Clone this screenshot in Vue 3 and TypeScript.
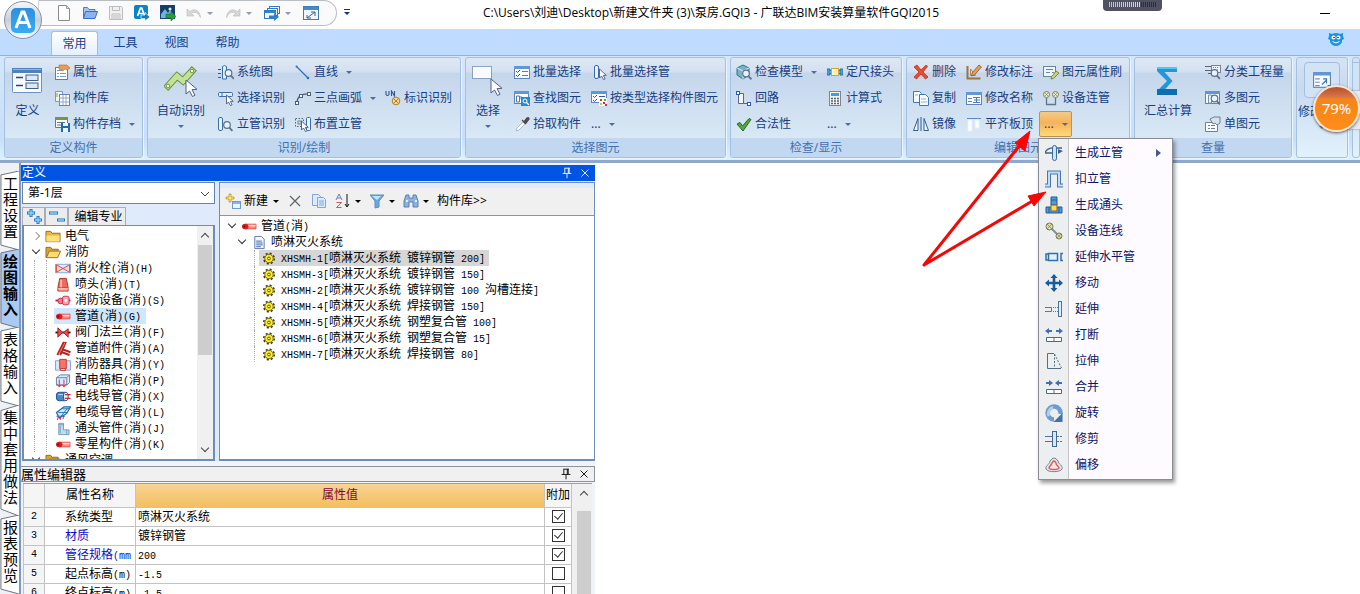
<script setup lang="ts">
import { ref } from 'vue'

interface Item { text: string; icon?: string; caret?: boolean; menu?: boolean }
interface Group { key: string; label: string; big?: Item; cols: (Item | null)[][] }

const tabs = ['常用', '工具', '视图', '帮助']
const activeTab = ref('常用')

const quick: { icon: string; name: string; caret?: boolean }[] = [
  { icon: 'newDoc', name: '新建' },
  { icon: 'open', name: '打开' },
  { icon: 'save', name: '保存' },
  { icon: 'exportA', name: '导出' },
  { icon: 'picture', name: '图片' },
  { icon: 'undo', name: '撤销', caret: true },
  { icon: 'redo', name: '恢复', caret: true },
  { icon: 'windows', name: '窗口', caret: true },
  { icon: 'fullscreen', name: '全屏' },
]

const groups: Group[] = [
  {
    key: 'define', label: '定义构件', big: { text: '定义', icon: 'define' },
    cols: [[{ text: '属性', icon: 'props' }, { text: '构件库', icon: 'lib' }, { text: '构件存档', icon: 'archive', caret: true }]],
  },
  {
    key: 'draw', label: '识别/绘制', big: { text: '自动识别', icon: 'auto', caret: true },
    cols: [
      [{ text: '系统图', icon: 'sysmap' }, { text: '选择识别', icon: 'selrec' }, { text: '立管识别', icon: 'pipefind' }],
      [{ text: '直线', icon: 'line', caret: true }, { text: '三点画弧', icon: 'arc', caret: true }, { text: '布置立管', icon: 'placepipe' }],
      [null, { text: '标识识别', icon: 'mark' }],
    ],
  },
  {
    key: 'select', label: '选择图元', big: { text: '选择', icon: 'select', caret: true },
    cols: [
      [{ text: '批量选择', icon: 'batch' }, { text: '查找图元', icon: 'find' }, { text: '拾取构件', icon: 'pick' }],
      [{ text: '批量选择管', icon: 'pipesel' }, { text: '按类型选择构件图元', icon: 'typesel' }, { text: '...', caret: true }],
    ],
  },
  {
    key: 'check', label: '检查/显示',
    cols: [
      [{ text: '检查模型', icon: 'model', caret: true }, { text: '回路', icon: 'loop' }, { text: '合法性', icon: 'legal' }],
      [{ text: '定尺接头', icon: 'joint' }, { text: '计算式', icon: 'calc' }, { text: '...', caret: true }],
    ],
  },
  {
    key: 'edit', label: '编辑图元',
    cols: [
      [{ text: '删除', icon: 'del' }, { text: '复制', icon: 'copy' }, { text: '镜像', icon: 'mirror' }],
      [{ text: '修改标注', icon: 'anno' }, { text: '修改名称', icon: 'rename' }, { text: '平齐板顶', icon: 'align' }],
      [{ text: '图元属性刷', icon: 'brush' }, { text: '设备连管', icon: 'connect' }, { text: '...', caret: true, menu: true }],
    ],
  },
  {
    key: 'query', label: '查量', big: { text: '汇总计算', icon: 'sigma' },
    cols: [[{ text: '分类工程量', icon: 'classify' }, { text: '多图元', icon: 'multi' }, { text: '单图元', icon: 'single' }]],
  },
]

const menu: Item[] = [
  { text: '生成立管', icon: 'mGen', caret: true }, { text: '扣立管', icon: 'mCut' }, { text: '生成通头', icon: 'mTee' },
  { text: '设备连线', icon: 'mWire' }, { text: '延伸水平管', icon: 'mHoriz' }, { text: '移动', icon: 'mMove' },
  { text: '延伸', icon: 'mExtend' }, { text: '打断', icon: 'mBreak' }, { text: '拉伸', icon: 'mStretch' },
  { text: '合并', icon: 'mMerge' }, { text: '旋转', icon: 'mRotate' }, { text: '修剪', icon: 'mTrim' }, { text: '偏移', icon: 'mOffset' },
]

const sideTabs = ['工程设置', '绘图输入', '表格输入', '集中套用做法', '报表预览']
const activeSide = ref('绘图输入')

const fire: Item[] = [
  { text: '消火栓(消)(H)', icon: 'tHydrant' }, { text: '喷头(消)(T)', icon: 'tHead' }, { text: '消防设备(消)(S)', icon: 'tEquip' },
  { text: '管道(消)(G)', icon: 'tPipe' }, { text: '阀门法兰(消)(F)', icon: 'tValve' }, { text: '管道附件(消)(A)', icon: 'tFitting' },
  { text: '消防器具(消)(Y)', icon: 'tTool' }, { text: '配电箱柜(消)(P)', icon: 'tBox' }, { text: '电线导管(消)(X)', icon: 'tWire' },
  { text: '电缆导管(消)(L)', icon: 'tCable' }, { text: '通头管件(消)(J)', icon: 'tElbow' }, { text: '零星构件(消)(K)', icon: 'tPipe' },
]
const activeFire = ref('管道(消)(G)')

const pipes = [
  'XHSMH-1[喷淋灭火系统 镀锌钢管 200]', 'XHSMH-3[喷淋灭火系统 镀锌钢管 150]', 'XHSMH-2[喷淋灭火系统 镀锌钢管 100 沟槽连接]',
  'XHSMH-4[喷淋灭火系统 焊接钢管 150]', 'XHSMH-5[喷淋灭火系统 钢塑复合管 100]', 'XHSMH-6[喷淋灭火系统 钢塑复合管 15]',
  'XHSMH-7[喷淋灭火系统 焊接钢管 80]',
]
const activePipe = ref(pipes[0])

const rows = ref([
  { n: 2, name: '系统类型', value: '喷淋灭火系统', on: true, key: false },
  { n: 3, name: '材质', value: '镀锌钢管', on: true, key: true },
  { n: 4, name: '管径规格(mm', value: '200', on: true, key: true },
  { n: 5, name: '起点标高(m)', value: '-1.5', on: false, key: false },
  { n: 6, name: '终点标高(m)', value: '-1.5', on: false, key: false },
])

// Splits a label into wide (CJK) and narrow (ASCII) runs so narrow glyphs take half a cell.
const runs = (s: string) => s.match(/[\x20-\x7e]+|[^\x20-\x7e]+/g) ?? []
const narrow = (s: string) => /^[\x20-\x7e]/.test(s)

const win = (x: number, y: number, w: number, h: number) =>
  `<rect x="${x + 0.5}" y="${y + 0.5}" width="${w - 1}" height="${h - 1}" fill="#f7fbff" stroke="#5b86bd"/><rect x="${x}" y="${y}" width="${w}" height="3" fill="#6197d2"/>`
const lens = (x: number, y: number) =>
  `<circle cx="${x}" cy="${y}" r="3.3" fill="#e6f2fd" stroke="#62718a" stroke-width="1.2"/><path d="M${x + 2.4} ${y + 2.6}l3 3.2" stroke="#62718a" stroke-width="1.8"/>`
const cursor = (x: number, y: number) =>
  `<path d="M${x} ${y}v9l2-2 2 3.6 1.6-.8-1.8-3.4h3z" fill="#fff" stroke="#4c5a78" stroke-width=".9"/>`
const pipeV = (x: number) =>
  `<rect x="${x + 0.5}" y="1.5" width="4" height="13" rx="1.5" fill="#e4f3ff" stroke="#3c6ea5"/>`

const icons: Record<string, string> = {
  newDoc: '<path d="M2.500.5h8l3 3v12h-11z" fill="#fdfdfd" stroke="#8b8b8b"/><path d="M10.500.5v3h3" fill="#ddd" stroke="#999"/>',
  open: '<path d="M1.500 13.500v-11h4l1.500 2h6v3" fill="#a9c5f3" stroke="#4f7cc9"/><path d="M1.500 13.500l2-7h12l-2.500 7z" fill="#8cb2f1" stroke="#3e6ec2"/>',
  save: '<path d="M1.500 1.500h12l1 1v12h-13z" fill="#f0f0f0" stroke="#bdbdbd"/><path d="M4.500 1.500v4h7v-4M4 14v-5h8v5M5 11h6M5 13h6" fill="none" stroke="#bdbdbd"/>',
  exportA: '<rect x="0" y="0" width="14" height="14" rx="2" fill="#0b84c6"/><path d="M3.500 11l3-8h1.200l3 8M4.800 8.500h4.600" fill="none" stroke="#fff" stroke-width="1.700"/><path d="M7 10h4V7.500l5 4.500-5 4v-2.500H7z" fill="#1779bd" stroke="#fff" stroke-width=".7"/>',
  picture: '<rect x=".5" y=".5" width="14" height="13" fill="#163b64" stroke="#154277"/><path d="M1 9l4-5 3 4 2-3 4 5v3H1z" fill="#6ab5e4"/><circle cx="10" cy="4" r="1.500" fill="#d6f1ff"/><path d="M6 9h5V6.500l5 5-5 4.500v-3H6z" fill="#2d9b37" stroke="#176b23" stroke-width=".6"/>',
  undo: '<path d="M1 4v7h7l-2.500-2.500c3-2.500 6.500-1 9 4C14 6 9 2.500 3.800 6.500z" fill="#d7d7d7" stroke="#bebebe" stroke-width=".7"/>',
  redo: '<path d="M15 4v7H8l2.500-2.500c-3-2.500-6.500-1-9 4C2 6 7 2.500 12.200 6.500z" fill="#d7d7d7" stroke="#bebebe" stroke-width=".7"/>',
  windows: '<g fill="#f3f9ff" stroke="#3479bd"><rect x="5.500" y="1.500" width="10" height="7"/><rect x="3.500" y="3.500" width="10" height="7"/><rect x=".5" y="5.500" width="11" height="8"/></g><path d="M1 6h10v2H1z" fill="#2d86d3"/><path d="M5 15h5v2l5-4-5-4v2.500H5z" transform="translate(0 -1)" fill="#2f7fd0"/>',
  fullscreen: '<rect x=".5" y="1.500" width="15" height="13" fill="#eef7ff" stroke="#3e7fb9"/><path d="M1 2h14v3H1z" fill="#3f8ec9"/><path d="M4 13l8-6M12 11V7H8M4 10v3h4" fill="none" stroke="#486077"/>',
  define: '<rect x="1.500" y="3.500" width="29" height="24" rx="1" fill="#f7fbff" stroke="#6e91bb"/><path d="M1 3h30v5H1z" fill="#4d82bd"/><path d="M2 4.500h28" stroke="#8cb7e5"/><path d="M5 12.500h7M5 20.500h7" stroke="#26476e" stroke-width="1.500"/><rect x="15" y="10" width="12" height="5.500" fill="#dce8f6" stroke="#41618c"/><rect x="15" y="18" width="12" height="5.500" fill="#dce8f6" stroke="#41618c"/>',
  props: '<rect x="1.500" y="3.500" width="12" height="12" fill="#fff" stroke="#5b7eac"/><path d="M3 6.500h5M3 9.500h2M6 9.500h6M3 12.500h2M6 12.500h6" stroke="#7699c5"/><path d="M5 1h8l3 3-3 2-2-1-2 2-4-2z" fill="#e79b55" stroke="#b66c2a" stroke-width=".6"/>',
  lib: '<path d="M1.500 1.500h7v10h-7z" fill="#eef5fc" stroke="#7c97ba"/><rect x="5.500" y="4.500" width="10" height="11" fill="#fff" stroke="#6787ae"/><path d="M5 8h10M5 12h10M9 5v10M12 5v10" stroke="#8faacb"/><rect x="2" y="3" width="2" height="4" fill="#e1c06b"/>',
  archive: '<path d="M1.500 1.500h12v10h-12z" fill="#f8fbf4" stroke="#587b9d"/><path d="M1 1h13v3H1z" fill="#75954f"/><path d="M3 6.500h8M3 9h4" stroke="#577694"/><rect x="7" y="7" width="9" height="9" fill="#2469ad"/><path d="M9 7h5v3H9zM9 12h5v4H9z" fill="#e9f5ff"/>',
  auto: '<path d="M4 21l9-10 6 5L28 6" fill="none" stroke="#6b8f45" stroke-width="7" stroke-linecap="square"/><path d="M4 21l9-10 6 5L28 6" fill="none" stroke="#c3e294" stroke-width="5" stroke-linecap="square"/><circle cx="4" cy="21" r="1.800" fill="#f3ffdf" stroke="#75974e"/><circle cx="28" cy="6" r="1.800" fill="#f3ffdf" stroke="#75974e"/><path d="M22 15v14l3.500-3 3 5.500 2.500-1.300-3-5.500 5-.4z" fill="#fff" stroke="#4d6186"/>',
  sysmap: '<path d="M0 5.500h3M0 9.500h3M0 13.500h3" stroke="#3c5b85"/><path d="M4.500 15V2.500q2-2 4 0V15z" fill="#dff1ff" stroke="#3c6ea5"/>' + lens(10.500, 9),
  selrec: '<rect x=".5" y="2.500" width="14" height="4" rx="1" fill="#dff1ff" stroke="#3c6ea5"/><path d="M4 2v4" stroke="#3c6ea5"/>' + cursor(8.500, 5),
  pipefind: pipeV(0) + lens(9, 9),
  line: '<path d="M1.500 2.500l11 11" stroke="#2872bd" stroke-width="1.300"/><circle cx="1.500" cy="2.500" r="1" fill="#2872bd"/><circle cx="13" cy="14" r="1.300" fill="#2872bd"/>',
  arc: '<path d="M2 13C2 7 6 3 15 4" fill="none" stroke="#49617e" stroke-width="1.300"/><g fill="#fff" stroke="#49617e"><rect x=".5" y="11.500" width="3" height="3"/><rect x="4.500" y="4.500" width="3" height="3"/><rect x="12.500" y="2.500" width="3" height="3"/></g>',
  placepipe: '<rect x=".5" y="2.500" width="8" height="8" fill="none" stroke="#4e6788" stroke-dasharray="1.500 1.500"/><rect x="3" y="5" width="3" height="3" fill="none" stroke="#6a84a5"/><rect x="11.500" y="1.500" width="4" height="13" rx="1" fill="#e4f3ff" stroke="#3c6ea5"/>' + cursor(6.500, 5),
  mark: '<path d="M1 1v3.500q1.500 2 3 0V1M6.500 6V1l3 5V1" fill="none" stroke="#33588e" stroke-width="1.100"/><circle cx="11" cy="11" r="3.800" fill="#ffd981" stroke="#a87f34"/><path d="M8.500 8.500l5 5M13.500 8.500l-5 5" stroke="#a87f34"/>',
  select: '<rect x="1.500" y="1.500" width="19" height="12" fill="#f7fbff"/><rect x="1.500" y="1.500" width="19" height="12" fill="none" stroke="#345b91" stroke-dasharray="1 1"/><path d="M20 14v14l3.500-3 3 5.500 2.500-1.300-3-5.500 5-.4z" fill="#fff" stroke="#4d6186"/>',
  batch: win(0, 2, 16, 13) + '<path d="M2 7l1.500 1.500L6 6M2 11l1.500 1.500L6 10" fill="none" stroke="#315d90"/><path d="M8 7.500h6M8 11.500h6" stroke="#577daf"/>',
  find: win(0, 1, 15, 13) + '<path d="M2.500 6v6h3V6zM7 6v3" fill="none" stroke="#527baf"/><rect x="7" y="7" width="9" height="9" fill="#2787d0"/><circle cx="11" cy="11" r="2" fill="none" stroke="#fff"/><path d="M12.500 12.500l2.500 2.500" stroke="#fff" stroke-width="1.300"/>',
  pick: '<path d="M2 15l1-3 6-6 2 2-6 6z" fill="#fff" stroke="#aebdcf"/><path d="M8 4l4 4M10 6l3-4q2-1 2 1l-3 4z" fill="#5b5150" stroke="#4c4648" stroke-width="1.300"/>',
  pipesel: pipeV(3) + cursor(8.500, 5),
  typesel: win(0, 1, 16, 12) + '<path d="M2 6l1.500 1.500L6 5M2 10l1.500 1.500L6 9M8 6.500h6" fill="none" stroke="#315d90"/><rect x="8" y="8" width="8" height="8" fill="#fff"/><rect x="9" y="9" width="2" height="2" fill="#e0352b"/><rect x="13" y="9" width="2" height="2" fill="#58a847"/><rect x="9" y="13" width="2" height="2" fill="#f2b735"/><rect x="12" y="12" width="2" height="2" fill="#be2c4c"/><rect x="14" y="14" width="2" height="2" fill="#e0352b"/>',
  model: '<path d="M1 4l6-3 6 3v7l-6 4-6-4z" fill="#77b3c4" stroke="#37718b"/><path d="M1 4l6 3 6-3M7 7v8" fill="none" stroke="#d5f2f8"/>' + lens(10, 9.500),
  loop: '<path d="M3 3.500h4.500v10H12" fill="none" stroke="#566b89"/><path d="M2.500 4v9.500h5" fill="none" stroke="#566b89"/><path d="M3 4h4v9H3z" fill="#f5f9ff"/><g fill="#fff" stroke="#2c5bc0"><rect x=".5" y="1.500" width="3" height="3"/><rect x="11.500" y="12.500" width="3" height="3"/></g>',
  legal: '<path d="M1 8l3-1.500 2.500 3.500L13 2.500l2 1L7 15z" fill="#54a83c" stroke="#236c1d"/>',
  joint: '<path d="M0 5h3v6H0zM13 5h3v6h-3zM2 6.500h12M2 9.500h12" fill="#40a8d9" stroke="#2677ad"/><rect x="4.500" y="4.500" width="7" height="7" fill="#fff" stroke="#cba43c"/><rect x="6" y="5" width="4" height="6" fill="#f9efb1"/>',
  calc: '<rect x="2.500" y="1.500" width="11" height="14" fill="#f4f4f4" stroke="#7c8592"/><rect x="4" y="3" width="8" height="3" fill="#4e99dd"/><path d="M4 8.500h2M7 8.500h2M10 8.500h2M4 11h2M7 11h2M10 11h2M4 13.500h2M7 13.500h2M10 13.500h2" stroke="#526375" stroke-width="1.500"/>',
  del: '<path d="M1 3l3-2 4 5 5-5 1.500 1.500L10 8l5 5-2.500 2L8 10l-4.500 5L1 13l5-5z" fill="#ee4b2b" stroke="#b62211" stroke-width=".7"/>',
  copy: '<g fill="#f7fbff" stroke="#397bb1"><path d="M.5 1.500h6l2 2v9h-8z"/><path d="M6.500 4.500h6l3 3v8h-9z"/></g><path d="M8 9h5M8 12h6M2 5h3" stroke="#8bb6db"/>',
  mirror: '<path d="M.5 14.500L5 2.500v12zM15.500 14.500L11 2.500v12z" fill="#edf6ff" stroke="#315f91"/><path d="M8 1v14" stroke="#315f91"/>',
  anno: '<path d="M1.500 2v12.500h13" fill="none" stroke="#997245" stroke-width="2"/><path d="M4.500 11.500V5l5 6.500z" fill="#f8e6bf" stroke="#af8556"/><path d="M6 9l7-8 2.500 2-7 8-3 1z" fill="#e4a050" stroke="#87572e" stroke-width=".8"/>',
  rename: win(0, 2, 16, 13) + '<path d="M2 8.500h4M2 11.500h4" stroke="#66839f"/><path d="M7 7.500h7M10.500 7v6M7 12.500h7M8 10h6" stroke="#527baf"/>',
  align: '<path d="M1 2.500h14" stroke="#5c89c6"/><path d="M2 4h4v11H2zM9 4h4v8H9z" fill="#fff" stroke="#e6efff"/>',
  brush: '<rect x=".5" y="2.500" width="12" height="10" fill="#edf5fc" stroke="#6a8499"/><path d="M3 5.500h7M3 8.500h4M9 8.500h2" stroke="#6c879f"/><path d="M8 15q0-3 2-4l3-4 3 2-4 4q-1 2-4 2z" fill="#c8d36c" stroke="#68723c" stroke-width=".8"/>',
  connect: '<path d="M3.500 8v6.500h9V8" fill="none" stroke="#5b7a87" stroke-width="1.300"/><g fill="#e9efc9" stroke="#7b7d57"><circle cx="3.500" cy="4.500" r="3"/><circle cx="12.500" cy="4.500" r="3"/></g><path d="M2 3l3 3M5 3L2 6M11 3l3 3M14 3l-3 3" stroke="#7b7d57" stroke-width=".7"/>',
  sigma: '<path d="M6 2h20v5H13.500l8 9-8 9H26v5H6v-4l10-10L6 6z" fill="#2396db"/><path d="M6 24h7.500H26v6H6z" fill="#116eae"/><path d="M6 2h20v2H6z" fill="#54c7ec"/>',
  classify: '<path d="M0 2.500h6M0 6.500h6M3 9.500h4" stroke="#5a6575"/><rect x="6.500" y="1.500" width="9" height="7" fill="#eef3fa" stroke="#73849d"/><path d="M8 3.500h6M8 6h6" stroke="#73849d" stroke-dasharray="1 1"/>' + lens(9.500, 9),
  multi: win(0, 1, 15, 13) + '<path d="M3.500 5v8h3V5z" fill="none" stroke="#6b92b6"/>' + lens(9.500, 8.500),
  single: '<path d="M.5 6.500h12v9H.5z" fill="#f8fbff" stroke="#72818f"/><path d="M3 9.500h2M6 9.500h4M3 12.500h2M6 12.500h4" stroke="#72818f"/><path d="M5 3l4-2h6v6l-3 2-2-2-2 1z" fill="#d8e2ec" stroke="#536579" stroke-width=".8"/>',
  modify: win(0, 1, 16, 14) + '<path d="M2 7h4M2 10h4M2 13h4" stroke="#7192b5"/><path d="M8 12l4-4M12 11V7H9M13 13h2" fill="none" stroke="#2c79bd"/>',

  mGen: '<path d="M0 9q2-6 11-5h6M0 9h8" fill="none" stroke="#3e638d" stroke-width="1.400"/><rect x="7.500" y="1.500" width="4" height="15" rx="2" fill="#c8e5f8" stroke="#3d6b9d"/><path d="M13 5l5 2-5 3z" fill="#3e638d"/>',
  mCut: '<path d="M0 15.500h4v-13h10v13h4" fill="none" stroke="#4778b0" stroke-width="4"/><path d="M0 15.500h4v-13h10v13h4" fill="none" stroke="#c3dbf4" stroke-width="2"/>',
  mTee: '<path d="M6 1h6v8H6zM1 11h16v6H1z" fill="#4d9be3" stroke="#285a99"/><rect x="6" y="9" width="6" height="6" fill="#ffda54" stroke="#846a2d"/><path d="M6 4h6M4 11v6M14 11v6" stroke="#285a99"/>',
  mWire: '<path d="M5 5l9 9" stroke="#7891a5" stroke-width="2"/><g fill="#dbe0a7" stroke="#7a7b51"><circle cx="4.500" cy="4.500" r="3.500"/><circle cx="14" cy="14" r="3"/></g><path d="M2 2l5 5M7 2L2 7M12 12l4 4M16 12l-4 4" stroke="#7a7b51" stroke-width=".7"/>',
  mHoriz: '<rect x="3.500" y="5.500" width="9" height="7" fill="#ddf1ff" stroke="#356fab" stroke-width="1.500"/><path d="M3 6H1v6h2M18 5.500h-2v7h2" fill="none" stroke="#356fab" stroke-width="1.500"/>',
  mMove: '<path d="M9 2v14M2 9h14" stroke="#1c5a98" stroke-width="2.600"/><path d="M9 0L5.500 4h7zM9 18l-3.500-4h7zM0 9l4-3.500v7zM18 9l-4-3.500v7z" fill="#1c5a98"/>',
  mExtend: '<path d="M0 7.500h6.500v4H0" fill="none" stroke="#587996"/><path d="M8 7.500h5M8 11.500h5" stroke="#587996" stroke-dasharray="1 1"/><rect x="13.500" y="1.500" width="3" height="15" fill="#ddedfb" stroke="#4e7398"/>',
  mBreak: '<path d="M1.500 11.500h15v4h-15zM9 11v5" fill="#fff" stroke="#486c91"/><path d="M0 5l4-3v2h3v2H4v2zM18 5l-4-3v2h-3v2h3v2z" fill="#3f71b0"/>',
  mStretch: '<path d="M9 1.500H2.500v15H16" fill="none" stroke="#526f88"/><path d="M9.500 2v14M9.500 2l7 14" fill="none" stroke="#526f88" stroke-dasharray="2 1.500"/>',
  mMerge: '<path d="M1.500 11.500h15v4h-15zM9 11v5" fill="#fff" stroke="#486c91"/><path d="M8 5L4 2v2H1v2h3v2zM10 5l4-3v2h3v2h-3v2z" fill="#3f71b0"/>',
  mRotate: '<path d="M9 15.500A6.500 6.500 0 1 1 15.500 10" fill="none" stroke="#6f9bd0" stroke-width="4.500"/><path d="M4 12A6 6 0 0 1 8 3.500" fill="none" stroke="#b3ceec" stroke-width="3"/><path d="M17.500 9v9h-9z" fill="#4471a9"/>',
  mTrim: '<path d="M0 6.500h7M0 11.500h7" stroke="#51738f"/><path d="M12 6.500h6M12 11.500h6" stroke="#51738f" stroke-dasharray="2 1"/><rect x="7.500" y="1.500" width="4" height="15" fill="#d5e8f8" stroke="#44698e"/>',
  mOffset: '<path d="M5 5q4-6 8 0c0 3 5 4 4 8-1 3-14 4-16 0-1-4 4-4 4-8z" fill="#e0e7ef" stroke="#6f8497"/><path d="M7 7q2-4 4 0c0 3 3 3 3 5-1 2-9 2-10 0 0-2 3-3 3-5z" fill="#ffe5e2" stroke="#df5858" stroke-width="1.400"/>',

  folder: '<path d="M.5 13.500v-11h5l1.500 2h8.500v9z" fill="#e9b93e" stroke="#8f6b21"/><path d="M1 7h14v6.500H1z" fill="#ffdf7a"/>',
  folderOpen: '<path d="M.5 13.500v-11h5l1.500 2h6.500v3" fill="#d9a531" stroke="#8f6b21"/><path d="M1 13.500l3-7h12l-3 7z" fill="#ffdc71" stroke="#93701f"/>',
  tHydrant: '<path d="M0 3.500h16v9H0z" fill="#dce9ff" stroke="#83a2e0"/><path d="M1 4l7 4-7 4zM15 4l-7 4 7 4z" fill="#ffd5cd" stroke="#dc493b"/>',
  tHead: '<path d="M4.500 1.500h7l2 10h-11z" fill="#ef6a58" stroke="#b52c22"/><path d="M2.500 12v3h11v-3" fill="#ffb2a4" stroke="#bd3528"/><path d="M6 3v8" stroke="#ffc0b5" stroke-width="2"/>',
  tEquip: '<path d="M0 8h16" stroke="#bd2643" stroke-width="2"/><rect x="2.500" y="5.500" width="6" height="6" rx="3" fill="#f57790" stroke="#c52846"/><rect x="7.500" y="3.500" width="7" height="9" rx="2" fill="#ffa2b3" stroke="#d02b49"/><circle cx="11" cy="8" r="1.500" fill="#fff"/>',
  tPipe: '<path d="M4 5.500h11.500v5H4z" fill="#ff8b83" stroke="#cf3e3b" stroke-width=".8"/><path d="M6 7h9" stroke="#ffe1df" stroke-width="1.500"/><ellipse cx="4" cy="8" rx="3.500" ry="3" fill="#d52023"/><circle cx="3" cy="8" r="1" fill="#79040b"/>',
  tValve: '<path d="M0 8h16" stroke="#111" stroke-width="2"/><path d="M2.500 3l5 5-5 5zM13.500 4l-5 4 5 5z" fill="#ef494a" stroke="#af1b25"/>',
  tFitting: '<path d="M2 15L9 1M5 15l6-14M5 8l11 4M4 11l11 4" stroke="#b52623" stroke-width="2.200"/><path d="M3.500 14L10 2" stroke="#ff806f"/>',
  tTool: '<path d="M0 4h16v10H0z" fill="#dce5ff" stroke="#899bd6"/><path d="M4.500 2.500h7v10h-7z" fill="#ff7465" stroke="#bd332b"/><path d="M5.500 14.500h5v-2h-5z" fill="#fff" stroke="#bd332b"/>',
  tBox: '<path d="M1 5l4-3h10v8l-3 3H1z" fill="#dce8fb" stroke="#637fa8"/><path d="M1 5h11v8M12 5l3-3" fill="none" stroke="#637fa8"/><path d="M4 7v7M9 7v7M2 12l2 3 2-3M7 12l2 3 2-3" fill="none" stroke="#d62c50"/>',
  tWire: '<rect x="1" y="3.500" width="12" height="9" rx="3" fill="#4788c9" stroke="#1a4a88"/><ellipse cx="11" cy="8" rx="2.500" ry="4.500" fill="#eef5ff" stroke="#1a4a88"/><path d="M10 6h6M10 10h6" stroke="#cf2638" stroke-width="1.300"/><path d="M3 6h5" stroke="#bce3ff"/>',
  tCable: '<path d="M1 8l8-6h7l-4 7-8 5z" fill="#cfeaff" stroke="#2167a7" stroke-width="1.300"/><path d="M3 8h10M7 4h8M6 12l7-9M1 12h9" stroke="#2676bd"/><path d="M3 12l-1 4M6 12l-1 4M9 11l-1 4" stroke="#d7344f"/>',
  tElbow: '<path d="M3.500 2.500h5v7h6v5h-11z" fill="#b7e0f5" stroke="#8295b2"/><path d="M3 4h6M12 9v6M5 5v8" stroke="#729bc4"/>',
  gear: '<circle cx="8" cy="8" r="5.600" fill="none" stroke="#3f3808" stroke-width="1.600" stroke-dasharray="2.200 2.200"/><circle cx="8" cy="8" r="4.500" fill="#f8ee20" stroke="#6b5d0c"/><circle cx="8" cy="8" r="1.500" fill="#fff9ad" stroke="#5c4a0b"/>',
  doc: '<path d="M3.500 1.500h7l3 3v10h-10z" fill="#f3f8ff" stroke="#5a75a5"/><path d="M5 6.500h6M5 8.500h7M5 10.500h7M5 12.500h5" stroke="#3f65ad"/>',
  plus2: '<path d="M5 0v8M1 4h8M12 7v8M8 11h8" stroke="#1d6dbb" stroke-width="3"/><path d="M5 .8v6.400M1.800 4h6.400M12 7.800v6.400M8.800 11h6.400" stroke="#8dd7ff" stroke-width="1.300"/>',
  minus2: '<path d="M0 4h9M8 11h8" stroke="#1d6dbb" stroke-width="3"/><path d="M.8 4h7.400M8.800 11h6.400" stroke="#8dd7ff" stroke-width="1.300"/>',
  rNew: '<path d="M4 1h2v3h3v2H6v3H4V6H1V4h3z" fill="#ffe76e" stroke="#b7962b" stroke-width=".8"/><rect x="7.500" y="8.500" width="8" height="7" fill="#eaf5ff" stroke="#719bd0"/><path d="M8 10h7" stroke="#83b4ec" stroke-width="2"/>',
  rDel: '<path d="M3 3l10 10M13 3L3 13" stroke="#61656e" stroke-width="1.300"/>',
  rCopy: '<g fill="#dcecff" stroke="#86a5d5"><path d="M1.500 1.500h6l2 2v9h-8z"/><path d="M6.500 4.500h6l2 2v8h-8z"/></g><path d="M8 8h5M8 10h5M8 12h5" stroke="#86a5d5"/>',
  rSort: '<path d="M1 7l3-6 3 6M2 5h4" fill="none" stroke="#6882ae"/><path d="M1.500 9.500h5l-5 5h5" fill="none" stroke="#c8575d"/><path d="M12 1v12M10 11l2 3 2-3" fill="none" stroke="#111"/>',
  rFilter: '<path d="M1 2h14L10 8v6l-4 1V8z" fill="#6ba8de" stroke="#5a8fc4"/><path d="M3 3h9L8 7z" fill="#bfe4ff"/>',
  rFind: '<path d="M3 2h3v3h4V2h3l2 6v6h-5V9H6v5H1V8z" fill="#8db2df" stroke="#5a80b0"/><path d="M3 8h2M12 8h2" stroke="#def2ff" stroke-width="2"/>',
  pin: '<path d="M5 2.500h6M5.500 2.500v6M9.500 2.500v6M10.500 2v6M3 8.500h10M8 9v5" fill="none" stroke="currentColor"/>',
  close: '<path d="M4 4l8 8M12 4l-8 8" stroke="currentColor"/>',
}
</script>

<template>
  <div class="app">
    <header class="titlebar">
      <div class="quickbar">
        <template v-for="q in quick" :key="q.icon">
          <button class="quick" :aria-label="q.name"><svg class="ico" viewBox="0 0 16 16" v-html="icons[q.icon]" /></button>
          <i v-if="q.caret" class="caret" />
        </template>
      </div>
      <button class="quick-more" aria-label="自定义快速访问工具栏"><i class="caret" /></button>
      <h1>C:\Users\刘迪\Desktop\新建文件夹 (3)\泵房.GQI3 - 广联达BIM安装算量软件GQI2015</h1>
      <button class="minimize" aria-label="最小化" />
    </header>
    <button class="orb" aria-label="主菜单">
      <svg viewBox="0 0 40 40">
        <defs>
          <linearGradient id="ring" x2="0" y2="1"><stop stop-color="#f8fafc" /><stop offset=".5" stop-color="#c6cfda" /><stop offset="1" stop-color="#f6fbff" /></linearGradient>
          <linearGradient id="tile" x2="0" y2="1"><stop stop-color="#2c8fdf" /><stop offset="1" stop-color="#39acf3" /></linearGradient>
        </defs>
        <circle cx="20" cy="20" r="18.500" fill="url(#ring)" stroke="#8292a8" />
        <rect x="8" y="8" width="24" height="25" rx="5" fill="url(#tile)" />
        <path d="M13 28l6-16h2l6 16M15.500 22.500h9" fill="none" stroke="#fff" stroke-width="3" />
      </svg>
    </button>
    <div class="meter"><i /></div>

    <nav class="tabs">
      <button v-for="t in tabs" :key="t" :class="{ active: t === activeTab }" @click="activeTab = t">{{ t }}</button>
      <svg class="mascot" viewBox="0 0 16 16">
        <path d="M1 2l3 1q4-2 8 0l3-1v3l1 3-2 1v2q-2 4-6 4t-6-4V9L0 8l1-3z" fill="#1c95df" />
        <circle cx="5.500" cy="6.500" r="2" fill="#fff" /><circle cx="10.500" cy="6.500" r="2" fill="#fff" />
        <circle cx="6" cy="6.500" r=".8" fill="#124" /><circle cx="10" cy="6.500" r=".8" fill="#124" />
        <path d="M4.500 10.500q3.500 3 7 0" fill="none" stroke="#fff" />
      </svg>
    </nav>

    <section class="ribbon">
      <div v-for="g in groups" :key="g.key" class="group" :class="g.key">
        <div class="group-body">
          <button v-if="g.big" class="big">
            <svg class="ico32" viewBox="0 0 34 34" v-html="icons[g.big.icon!]" />
            <span>{{ g.big.text }}</span>
            <i v-if="g.big.caret" class="caret" />
          </button>
          <div v-for="(col, ci) in g.cols" :key="ci" class="col">
            <template v-for="(it, ri) in col" :key="ri">
              <span v-if="!it" class="blank" />
              <div v-else-if="it.menu" class="menu-host">
                <button class="cmd open"><span>{{ it.text }}</span><i class="caret" /></button>
                <div class="menu" role="menu">
                  <button v-for="m in menu" :key="m.text" role="menuitem">
                    <svg class="ico18" viewBox="0 0 18 18" v-html="icons[m.icon!]" />
                    <span>{{ m.text }}</span>
                    <i v-if="m.caret" class="sub" />
                  </button>
                </div>
              </div>
              <button v-else class="cmd">
                <svg v-if="it.icon" class="ico" viewBox="0 0 16 16" v-html="icons[it.icon]" />
                <span>{{ it.text }}</span>
                <i v-if="it.caret" class="caret" />
              </button>
            </template>
          </div>
        </div>
        <div class="group-label">{{ g.label }}</div>
      </div>
      <div class="group folded">
        <button class="fold"><span class="frame"><svg class="ico" viewBox="0 0 16 16" v-html="icons.modify" /></span><span class="fold-text">修改</span><i class="caret" /></button>
      </div>
      <div class="group folded rest"><button class="fold" aria-label="更多"><span class="frame" /></button></div>
    </section>

    <main class="work">
      <nav class="side">
        <button v-for="s in sideTabs" :key="s" :class="{ active: s === activeSide }" @click="activeSide = s">
          <svg viewBox="0 0 20 80" preserveAspectRatio="none"><path d="M20 0L1 4V75L20 80" vector-effect="non-scaling-stroke" /></svg>
          <span>{{ s }}</span>
        </button>
      </nav>

      <div class="dock">
        <section class="define-panel">
          <header class="bar blue">
            <h2>定义</h2>
            <button aria-label="固定"><svg viewBox="0 0 16 16" v-html="icons.pin" /></button>
            <button aria-label="关闭"><svg viewBox="0 0 16 16" v-html="icons.close" /></button>
          </header>
          <div class="panes">
            <div class="left">
              <div class="floor">
                <select aria-label="楼层"><option>第-1层</option></select>
                <svg viewBox="0 0 10 6"><path d="M1 1l4 4 4-4" fill="none" stroke="#444" /></svg>
              </div>
              <div class="tools">
                <button aria-label="展开"><svg class="ico" viewBox="0 0 16 16" v-html="icons.plus2" /></button>
                <button aria-label="折叠"><svg class="ico" viewBox="0 0 16 16" v-html="icons.minus2" /></button>
                <button>编辑专业</button>
              </div>
              <div class="treebox">
                <ul class="tree">
                  <li class="lv1"><i class="tw closed" /><svg class="ico" viewBox="0 0 16 16" v-html="icons.folder" /><span>电气</span></li>
                  <li class="lv1"><i class="tw" /><svg class="ico" viewBox="0 0 16 16" v-html="icons.folderOpen" /><span>消防</span></li>
                  <li v-for="f in fire" :key="f.text" class="lv2" @click="activeFire = f.text">
                    <div :class="{ on: f.text === activeFire }">
                      <svg class="ico" viewBox="0 0 16 16" v-html="icons[f.icon!]" />
                      <span><span v-for="(r, i) in runs(f.text)" :key="i" :class="{ half: narrow(r) }">{{ r }}</span></span>
                    </div>
                  </li>
                  <li class="lv1"><i class="tw" /><svg class="ico" viewBox="0 0 16 16" v-html="icons.folderOpen" /><span>通风空调</span></li>
                </ul>
                <div class="scroll"><i class="up" /><i class="thumb" /><i class="down" /></div>
              </div>
            </div>

            <div class="right">
              <div class="rtools">
                <button class="new"><svg class="ico" viewBox="0 0 16 16" v-html="icons.rNew" />新建<i class="caret" /></button>
                <button aria-label="删除"><svg class="ico" viewBox="0 0 16 16" v-html="icons.rDel" /></button>
                <button aria-label="复制"><svg class="ico" viewBox="0 0 16 16" v-html="icons.rCopy" /></button>
                <button aria-label="排序"><svg class="ico" viewBox="0 0 16 16" v-html="icons.rSort" /><i class="caret" /></button>
                <button aria-label="过滤"><svg class="ico" viewBox="0 0 16 16" v-html="icons.rFilter" /><i class="caret" /></button>
                <button aria-label="查找"><svg class="ico" viewBox="0 0 16 16" v-html="icons.rFind" /><i class="caret" /></button>
                <button class="library">构件库&gt;&gt;</button>
              </div>
              <ul class="tree parts">
                <li class="p1"><i class="tw" /><svg class="ico" viewBox="0 0 16 16" v-html="icons.tPipe" /><span>管道<span class="half">(</span>消<span class="half">)</span></span></li>
                <li class="p2"><i class="tw" /><svg class="ico" viewBox="0 0 16 16" v-html="icons.doc" /><span>喷淋灭火系统</span></li>
                <li v-for="p in pipes" :key="p" class="p3" @click="activePipe = p">
                  <div :class="{ on: p === activePipe }">
                    <svg class="ico" viewBox="0 0 16 16" v-html="icons.gear" />
                    <span><span v-for="(r, i) in runs(p)" :key="i" :class="{ half: narrow(r) }">{{ r }}</span></span>
                  </div>
                </li>
              </ul>
            </div>
          </div>
        </section>

        <section class="prop-panel">
          <header class="bar gray">
            <h2>属性编辑器</h2>
            <button aria-label="固定"><svg viewBox="0 0 16 16" v-html="icons.pin" /></button>
            <button aria-label="关闭"><svg viewBox="0 0 16 16" v-html="icons.close" /></button>
          </header>
          <div class="grid">
            <table>
              <colgroup><col class="c-n"><col class="c-name"><col><col class="c-on"></colgroup>
              <thead><tr><th /><th>属性名称</th><th class="val">属性值</th><th>附加</th></tr></thead>
              <tbody>
                <tr v-for="r in rows" :key="r.n">
                  <th>{{ r.n }}</th>
                  <td class="name" :class="{ key: r.key }"><span v-for="(s, i) in runs(r.name)" :key="i" :class="{ half: narrow(s) }">{{ s }}</span></td>
                  <td><span v-for="(s, i) in runs(r.value)" :key="i" :class="{ half: narrow(s) }">{{ s }}</span></td>
                  <td class="on"><input v-model="r.on" type="checkbox" :aria-label="r.name"></td>
                </tr>
              </tbody>
            </table>
            <div class="scroll"><i class="up" /><i class="thumb long" /></div>
          </div>
        </section>
      </div>
      <div class="canvas" />
    </main>

    <svg class="arrows" viewBox="0 0 130 140">
      <path d="M4 135L100 15M4 135L114 70" fill="none" stroke="#f60606" stroke-width="3" stroke-linecap="round" />
      <path d="M110 1L95 13l10 8zM126 62L108 66l6 10z" fill="#f60606" stroke="#f60606" />
    </svg>
    <div class="gauge"><span>79%</span></div>
  </div>
</template>

<style>
body { margin: 0; overflow: hidden; background: #fff; }
</style>

<style scoped>
.app { position: relative; height: 100vh; display: flex; flex-direction: column; overflow: hidden; background: #fff; font: 12px/16px "Noto Sans", "Noto Sans CJK SC", sans-serif; color: #000; }
.app * { box-sizing: border-box; }
button { font: inherit; color: inherit; border: 0; padding: 0; margin: 0; background: none; white-space: nowrap; }
h1, h2, ul { margin: 0; padding: 0; font-weight: 400; list-style: none; }
svg { display: block; flex: none; }
.ico { width: 16px; height: 16px; }
.ico18 { width: 18px; height: 18px; }
.ico32 { width: 34px; height: 34px; }
.caret { flex: none; width: 0; height: 0; border: 3px solid transparent; border-top-color: #4f6d9a; border-bottom: 0; }
.app .half { font-family: "Liberation Mono", monospace; font-size: 10px; line-height: 1px; white-space: pre; }

.titlebar { flex: none; height: 29px; display: flex; align-items: flex-start; background: #fff; }
.quickbar { height: 26px; width: 299px; margin-left: 38px; padding: 0 12px 0 17px; display: flex; align-items: center; gap: 10px; border: 1px solid #b9bdc4; border-left-color: #d6dae0; border-radius: 0 13px 13px 0; background: #fafafa; }
.quickbar .caret { margin: 0 2px 0 -5px; border-top-color: #8f9bb0; }
.quick-more { width: 20px; height: 26px; display: flex; align-items: center; justify-content: center; }
.quick-more .caret { border-top-color: #16346c; position: relative; }
.quick-more .caret::before { content: ""; position: absolute; left: -3px; top: -6px; width: 6px; height: 1px; background: #16346c; }
.titlebar h1 { flex: 1; padding-left: 126px; font-size: 12px; line-height: 26px; white-space: nowrap; font-family: "Open Sans", "Noto Sans CJK SC", sans-serif; }
.minimize { width: 10px; height: 1px; margin: 13px 30px 0 0; background: #000; }
.orb { position: absolute; left: 3px; top: 0; z-index: 3; width: 40px; height: 40px; }
.orb svg { width: 40px; height: 40px; }
.meter { position: absolute; right: 198px; top: 0; width: 59px; height: 11px; padding: 2px 6px; border-radius: 0 0 4px 4px; background: #505162; }
.meter i { display: block; height: 5px; background: repeating-linear-gradient(90deg, transparent 0 1px, #505162 1px 2px), linear-gradient(90deg, #7fe0c0, #d8f050 60%, #f0e040 66%, #2c2d38 67%); }

.tabs { flex: none; height: 26px; display: flex; align-items: flex-end; padding-left: 51px; background: #bfdbff; color: #15428b; }
.tabs button { width: 47px; height: 24px; margin-right: 4px; }
.tabs button.active { margin-bottom: -1px; height: 25px; border: 1px solid #9dbfe8; border-bottom: 0; border-radius: 3px 3px 0 0; background: linear-gradient(#fff, #e4eefb); position: relative; z-index: 1; }
.mascot { width: 16px; height: 16px; margin: 0 16px 8px auto; }

.ribbon { flex: none; height: 108px; position: relative; z-index: 2; display: flex; gap: 4px; align-items: flex-start; padding: 1px 0 0 4px; border-top: 1px solid #8db2e3; border-bottom: 3px solid #8ea9cc; background: linear-gradient(#d5e6fb, #c9defa 80%, #d8f4fe); color: #17407f; }
.group { flex: none; height: 101px; border: 1px solid #a4c1df; border-radius: 3px; box-shadow: 1px 1px 0 #eaf4ff; background: linear-gradient(#dde8f5 0, #d4e0f0 14px, #c5d6ec 15px, #d8e8f5 80px); display: flex; flex-direction: column; }
.group-body { height: 80px; display: grid; padding-top: 1px; }
.group-label { height: 19px; line-height: 19px; text-align: center; color: #4470b0; background: #c2d8f0; border-radius: 0 0 2px 2px; }
.define { width: 139px; } .define .group-body { grid-template-columns: 49px 1fr; }
.draw { width: 314px; } .draw .group-body { grid-template-columns: 70px 77px 90px 1fr; }
.select { width: 261px; } .select .group-body { grid-template-columns: 48px 77px 1fr; }
.check { width: 172px; } .check .group-body { grid-template-columns: 91px 1fr; padding-left: 5px; }
.edit { width: 224px; } .edit .group-body { grid-template-columns: 53px 77px 1fr; padding-left: 6px; }
.query { width: 158px; } .query .group-body { grid-template-columns: 70px 1fr; }
.big { display: flex; flex-direction: column; align-items: center; padding: 6px 4px 0 0; }
.big span { line-height: 24px; }
.big .caret { margin-top: 2px; }
.col { display: flex; flex-direction: column; align-items: flex-start; min-width: 0; }
.cmd { height: 26px; display: flex; align-items: center; gap: 3px; }
.blank { height: 26px; }
.cmd .caret { margin-left: 5px; }
.menu-host { position: relative; margin-left: -4px; }
.cmd.open { width: 33px; padding-left: 4px; border: 1px solid #b8935a; border-radius: 2px; background: linear-gradient(#f5c987, #f5b35a 45%, #ffd978); }
.menu { position: absolute; left: -1px; top: 27px; width: 135px; padding: 1px 0; border: 1px solid #8a8d94; background: linear-gradient(90deg, #eceef0 0 29px, #c5c5c5 29px 30px, #fdfbff 30px); box-shadow: 2px 3px 4px #0006; color: #0d1465; }
.menu button { width: 100%; height: 26px; display: flex; align-items: center; padding-left: 6px; gap: 12px; }
.sub { margin: 0 11px 0 auto; border: 4px solid transparent; border-left: 5px solid #4d5687; border-right: 0; }
.folded { width: 52px; background: linear-gradient(#d5e3f5, #c8daf0 30px, #e2f2fc); }
.folded.rest { flex: 1; overflow: hidden; }
.fold { display: flex; flex-direction: column; align-items: center; width: 100%; padding-top: 4px; }
.fold-text { align-self: flex-start; padding-left: 1px; line-height: 28px; }
.frame { width: 36px; height: 36px; display: flex; align-items: center; justify-content: center; border: 1px solid #a3bedf; border-radius: 4px; background: #d2e3f6; }
.frame .ico { width: 18px; height: 18px; }

.work { flex: 1; min-height: 0; display: flex; }
.side { flex: none; width: 21px; padding-top: 8px; background: #edf1f6; border-right: 2px solid #7d98c2; }
.side button { position: relative; display: block; width: 19px; padding: 4px 0 11px 3px; margin-bottom: -1px; white-space: normal; font-size: 15px; line-height: 16px; }
.side svg { position: absolute; inset: 0; width: 100%; height: 100%; }
.side path { fill: #fff; stroke: #707780; }
.side span { position: relative; display: block; width: 15px; word-break: break-all; }
.side .active path { fill: #a9cbf3; }
.side .active { font-weight: 700; }

.dock { flex: none; width: 574px; display: flex; flex-direction: column; gap: 5px; padding-top: 2px; background: #f0f3f8; }
.bar { display: flex; align-items: center; height: 16px; }
.bar h2 { flex: 1; font-size: 13px; line-height: 14px; }
.bar button { width: 16px; height: 14px; margin-right: 2px; }
.bar svg { width: 16px; height: 14px; }
.blue { background: #0054e3; color: #fff; }
.blue h2 { font-size: 12px; padding-left: 1px; }
.gray { background: #f0f0f0; border: 1px solid #8d939c; border-left: 0; }
.define-panel { flex: none; height: 296px; display: flex; flex-direction: column; }
.panes { flex: 1; min-height: 0; display: grid; grid-template-columns: 193px 1fr; gap: 4px; padding: 1px 0 0 1px; background: #dfebfa; }
.left { display: flex; flex-direction: column; min-height: 0; }
.floor { position: relative; height: 22px; }
.floor select { appearance: none; width: 100%; height: 22px; padding: 0 5px; border: 1px solid #6583b0; border-radius: 0; background: #fff; color: #000; font: inherit; }
.floor svg { position: absolute; right: 5px; top: 9px; width: 10px; height: 6px; }
.tools { display: flex; height: 18px; margin-top: 3px; }
.tools button { width: 23px; padding-left: 3px; border: 1px solid #a9adb5; border-bottom: 0; background: #ececec; }
.tools button:last-child { width: 58px; }
.treebox { flex: 1; min-height: 0; display: flex; overflow: hidden; border: 2px solid #6d8db8; border-top-width: 1px; background: #fff; }
.tree { flex: 1; overflow: hidden; padding-top: 2px; }
.tree li { height: 16px; display: flex; align-items: center; white-space: nowrap; }
.tree li span { line-height: 16px; }
.tree .ico { height: 15px; }
.lv1 { padding-left: 7px; }
.lv1 .ico { margin: 0 4px 0 4px; }
.tw { flex: none; width: 6px; height: 6px; margin: 0 2px 4px 2px; border: solid #333; border-width: 0 1px 1px 0; transform: rotate(45deg); }
.tw.closed { transform: rotate(-45deg); margin: 0 2px; border-color: #999; }
.lv2 { padding-left: 10px; position: relative; }
.lv2::before { content: ""; align-self: stretch; width: 11px; border: dotted #aaa; border-width: 0 1px; margin-right: 7px; }
.lv2 div { display: flex; align-items: center; height: 16px; padding: 0 5px 0 1px; gap: 4px; }
.lv2 .on { background: #cfe6fc; }
.scroll { flex: none; width: 16px; display: flex; flex-direction: column; align-items: center; background: #f0f0f0; }
.up, .down { flex: none; width: 6px; height: 6px; margin: 8px 0 5px; border: solid #444; border-width: 1px 0 0 1px; transform: rotate(45deg); }
.down { margin: auto 0 8px; transform: rotate(225deg); }
.thumb { width: 14px; height: 110px; background: #cdcdcd; }
.thumb.long { flex: 1; margin-top: 8px; }
.right { display: flex; flex-direction: column; border: 1px solid #6d8db8; border-bottom-width: 2px; background: #fff; }
.rtools { display: flex; align-items: center; height: 33px; padding: 4px 0 0 5px; gap: 8px; border-bottom: 1px solid #8096b4; background: linear-gradient(#dfebfa 0 5px, #f0f0f0 5px); }
.rtools button { display: flex; align-items: center; gap: 3px; }
.rtools .caret { border-top-color: #000; margin-left: 1px; }
.rtools .new .caret { margin-left: 2px; }
.p1 { padding-left: 7px; } .p2 { padding-left: 17px; }
.p1 .ico { margin: 0 4px 0 4px; } .p2 .ico { margin: 0 4px 0 4px; }
.p3 { padding-left: 34px; }
.p3::before { content: ""; align-self: stretch; border-left: 1px dotted #aaa; margin-right: 4px; }
.p3 div { display: flex; align-items: center; height: 16px; gap: 4px; padding: 0 4px 0 2px; }
.p3 .on { background: #d6d6d6; }

.prop-panel { flex: 1; min-height: 0; overflow: hidden; }
.grid { display: flex; height: 100%; margin: 1px 3px 0 2px; border-top: 1px solid #a0a0a0; background: #f0f0f0; }
.grid .scroll { margin-left: 4px; }
table { flex: 1; width: 0; align-self: flex-start; table-layout: fixed; border-collapse: collapse; background: #fff; }
.c-n { width: 21px; } .c-name { width: 91px; } .c-on { width: 27px; }
th, td { height: 19px; padding: 0 2px; border: 1px solid #c3c3c3; border-top: 0; font-weight: 400; text-align: left; line-height: 18px; white-space: nowrap; overflow: hidden; }
th { text-align: center; background: #f5f5f6; padding: 0; }
tbody th { font-family: "Liberation Mono", monospace; font-size: 10px; }
thead th { height: 23px; }
thead .val { color: #7d0a38; background: linear-gradient(#f8d493, #f2be60); }
td.name { padding-left: 20px; padding-right: 0; }
td.key { color: #0c0cc8; }
td.on { padding: 0; text-align: center; }
input { appearance: none; display: block; position: relative; width: 13px; height: 13px; margin: 0 auto; border: 1px solid #333; background: #fff; }
input:checked::after { content: ""; position: absolute; left: 3px; top: 0; width: 4px; height: 7px; border: solid #333; border-width: 0 1px 1px 0; transform: rotate(40deg); }
.canvas { flex: 1; background: #fff; }

.arrows { position: absolute; left: 920px; top: 130px; width: 130px; height: 140px; z-index: 4; pointer-events: none; }
.gauge { position: absolute; right: 0; top: 91px; z-index: 4; width: 21px; height: 38px; background: #e7eaf0; box-shadow: 0 0 2px #888; }
.gauge span { position: absolute; right: 0; top: -6px; width: 47px; height: 47px; border: 2px solid #f5e4d5; border-radius: 50%; background: linear-gradient(#b5502a 0, #d8754a 10px, #f58518 12px, #ff8c1a 40px); box-shadow: 0 1px 3px #555; color: #fff; font: 15px/43px "Noto Sans", sans-serif; text-align: center; }
</style>
